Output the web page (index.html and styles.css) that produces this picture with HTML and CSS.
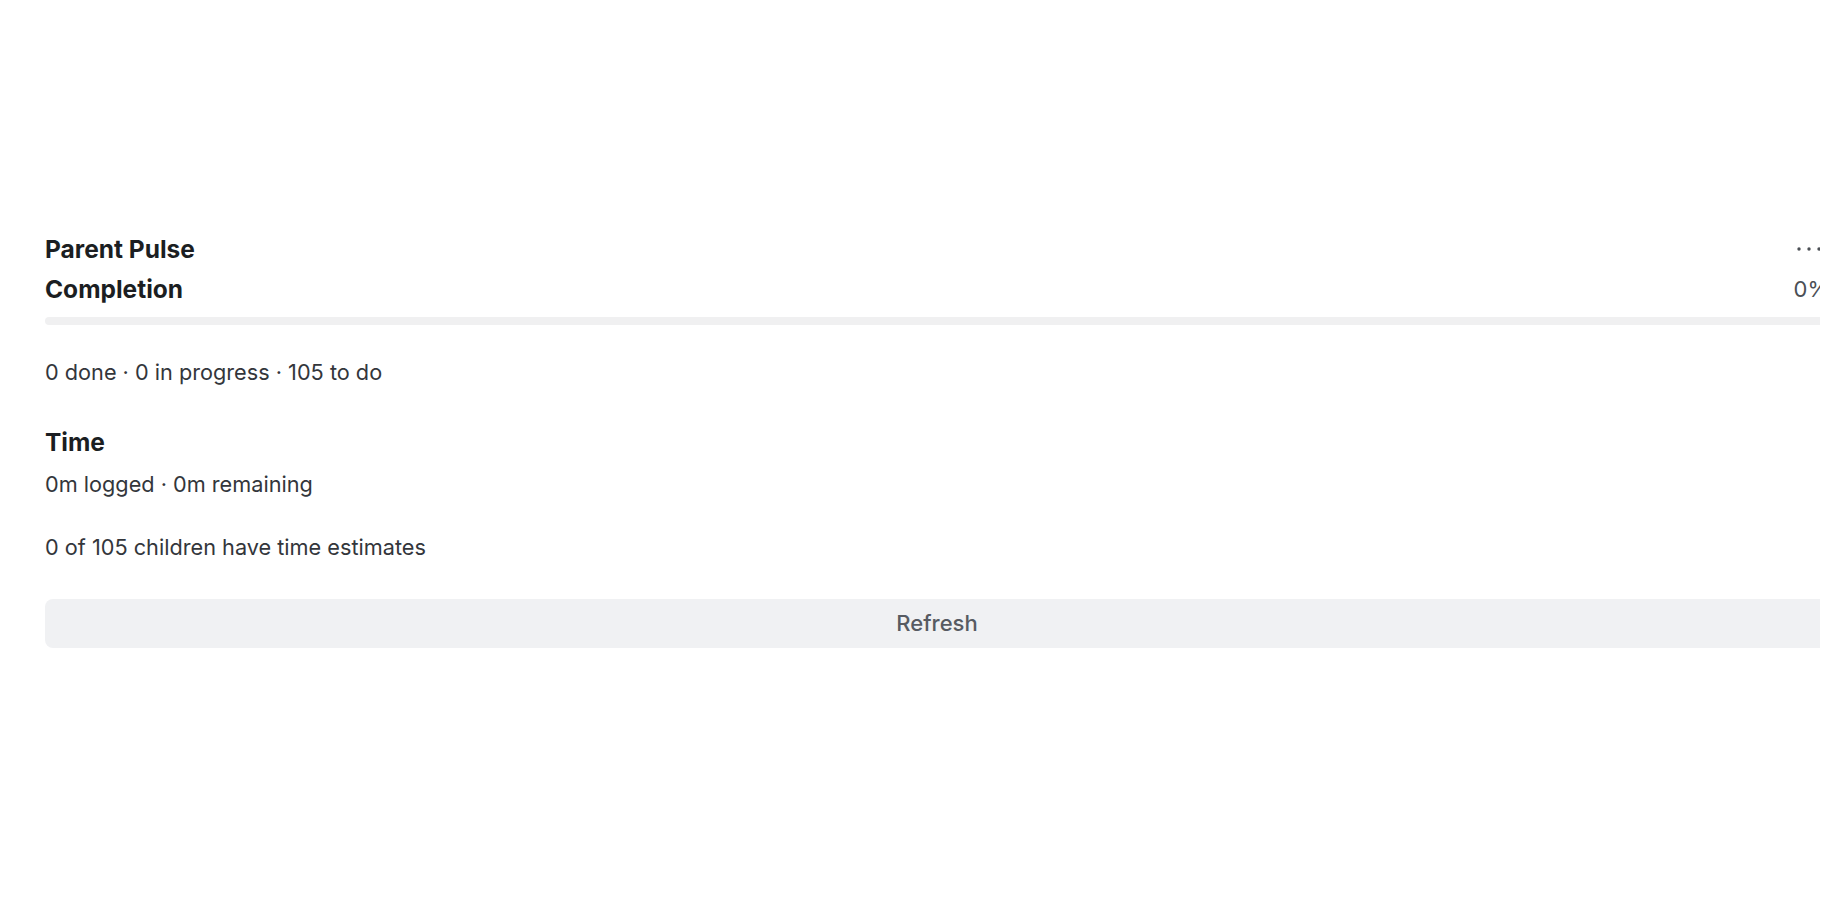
FILE: index.html
```html
<!DOCTYPE html>
<html lang="en">
<head>
<meta charset="utf-8">
<title>Parent Pulse</title>
<link rel="stylesheet" href="styles.css">
</head>
<body>
<div class="clip">
  <main class="panel">
    <div class="row header">
      <h1 class="title">Parent Pulse</h1>
      <button class="more" aria-label="More options">
        <svg width="34" height="8" viewBox="0 0 34 8"><circle cx="4" cy="4" r="1.7"/><circle cx="14" cy="4" r="1.7"/><circle cx="24" cy="4" r="1.7"/></svg>
      </button>
    </div>
    <div class="row">
      <h2 class="label">Completion</h2>
      <span class="pct">0%</span>
    </div>
    <div class="bar"><div class="fill" style="width:0%"></div></div>
    <p class="text counts">0 done · 0 in progress · 105 to do</p>
    <h2 class="label time">Time</h2>
    <p class="text logged">0m logged · 0m remaining</p>
    <p class="text estimates">0 of 105 children have time estimates</p>
    <button class="refresh">Refresh</button>
  </main>
</div>
</body>
</html>
```
FILE: styles.css
```css
html, body {
  margin: 0;
  padding: 0;
  background: #ffffff;
}
body {
  font-family: Inter, "Noto Sans", "Liberation Sans", sans-serif;
  font-size: 21.7px;
  color: #33363b;
}
.clip {
  width: 1820px;
  height: 900px;
  overflow: hidden;
}
.panel {
  width: 1784px;
  padding: 228px 45px 0 45px;
  display: flex;
  flex-direction: column;
}
.row {
  display: flex;
  justify-content: space-between;
  align-items: center;
}
.header {
  height: 42px;
}
.title, .label {
  margin: 0;
  font-size: 24.5px;
  font-weight: 700;
  color: #1b1e22;
  line-height: 42px;
}
.row + .row {
  margin-top: 2px;
}
.row + .row .label,
.row + .row .pct {
  line-height: 34px;
}
.pct {
  color: #4b4f55;
  font-size: 22px;
}
.more {
  border: 0;
  background: transparent;
  padding: 0;
  margin: 0;
  display: flex;
  align-items: center;
  fill: #4b4f55;
}
.bar {
  margin-top: 11px;
  height: 8px;
  border-radius: 4px;
  background: #f0f0f1;
  overflow: hidden;
}
.fill {
  height: 100%;
  background: #2f6feb;
}
.text {
  margin: 0;
  line-height: 34px;
}
.counts {
  margin-top: 30px;
}
.label.time {
  line-height: 34px;
  margin-top: 36px;
}
.logged {
  margin-top: 8px;
}
.estimates {
  margin-top: 29px;
}
.refresh {
  margin-top: 35px;
  height: 49px;
  border: 0;
  border-radius: 8px;
  background: #f0f1f3;
  font-family: inherit;
  font-size: 22px;
  font-weight: 500;
  color: #575b62;
  line-height: 49px;
  padding: 0;
}
```
